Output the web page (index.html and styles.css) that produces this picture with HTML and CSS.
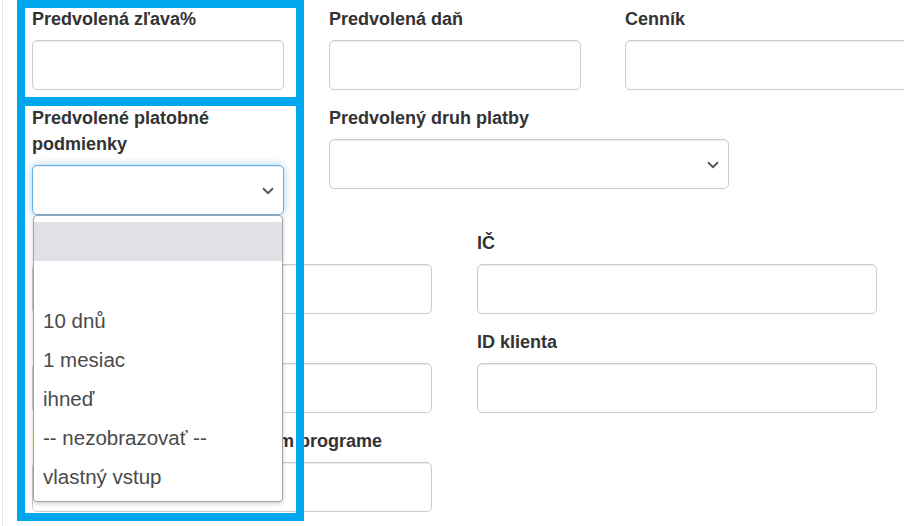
FILE: index.html
```html
<!DOCTYPE html>
<html lang="sk">
<head>
<meta charset="utf-8">
<title>Predvolené nastavenia</title>
<link rel="stylesheet" href="styles.css">
</head>
<body>
<div class="page">
  <div class="row">
    <div class="group narrow">
      <label class="lbl">Predvolená zľava%</label>
      <div class="field"></div>
    </div>
    <div class="group narrow">
      <label class="lbl">Predvolená daň</label>
      <div class="field"></div>
    </div>
    <div class="group wide-clip">
      <label class="lbl">Cenník</label>
      <div class="field"></div>
    </div>
  </div>

  <div class="row">
    <div class="group narrow host">
      <label class="lbl">Predvolené platobné podmienky</label>
      <div class="field select focus">
        <svg class="chev" width="12" height="8" viewBox="0 0 12 8"><path d="M1 1.2 L6 6.2 L11 1.2" fill="none" stroke="#555" stroke-width="2"/></svg>
      </div>
      <ul class="menu">
        <li class="opt hl">&nbsp;</li>
        <li class="opt">&nbsp;</li>
        <li class="opt">10 dnů</li>
        <li class="opt">1 mesiac</li>
        <li class="opt">ihneď</li>
        <li class="opt">-- nezobrazovať --</li>
        <li class="opt">vlastný vstup</li>
      </ul>
    </div>
    <div class="group half">
      <label class="lbl">Predvolený druh platby</label>
      <div class="field select">
        <svg class="chev" width="12" height="8" viewBox="0 0 12 8"><path d="M1 1.2 L6 6.2 L11 1.2" fill="none" stroke="#555" stroke-width="2"/></svg>
      </div>
    </div>
  </div>

  <div class="row">
    <div class="group half">
      <label class="lbl">&nbsp;</label>
      <div class="field"></div>
    </div>
    <div class="group half">
      <label class="lbl">IČ</label>
      <div class="field"></div>
    </div>
  </div>

  <div class="row">
    <div class="group half">
      <label class="lbl">&nbsp;</label>
      <div class="field"></div>
    </div>
    <div class="group half">
      <label class="lbl">ID klienta</label>
      <div class="field"></div>
    </div>
  </div>

  <div class="row">
    <div class="group half">
      <label class="lbl">Identifikačné číslo v účtovnom programe</label>
      <div class="field"></div>
    </div>
  </div>
</div>

<div class="mark mark-top"></div>
<div class="mark mark-bottom"></div>
</body>
</html>
```

FILE: styles.css
```css
html, body {
  margin: 0;
  padding: 0;
  background: #fff;
  overflow: hidden;
}

body {
  width: 904px;
  height: 526px;
  position: relative;
  font-family: "Liberation Sans", Arial, sans-serif;
  color: #333;
}

.page {
  margin-left: 2px;
  border-left: 1px solid #e6e6e6;
  min-height: 526px;
  padding: 6px 0 0 29px;
  box-sizing: border-box;
}

.row {
  display: flex;
  gap: 45px;
  align-items: flex-start;
}

.group {
  margin-bottom: 15px;
  flex: none;
}

.narrow { width: 252px; }
.half { width: 400px; }
.wide-clip { width: 320px; margin-left: -1px; }

.host { position: relative; }

.lbl {
  display: block;
  font-size: 18px;
  font-weight: bold;
  line-height: 26px;
  margin-bottom: 8px;
  color: #333;
}

.field {
  height: 50px;
  box-sizing: border-box;
  border: 1px solid #ccc;
  border-radius: 5px;
  background: #fff;
  box-shadow: inset 0 1px 1px rgba(0, 0, 0, 0.075);
  position: relative;
}

.select .chev {
  position: absolute;
  right: 9px;
  top: 21px;
}

.focus {
  border-color: #66afe9;
  box-shadow: inset 0 1px 1px rgba(0, 0, 0, 0.075), 0 0 8px rgba(102, 175, 233, 0.6);
}

.menu {
  position: absolute;
  left: 1px;
  top: 100%;
  width: 250px;
  box-sizing: border-box;
  margin: 0;
  padding: 6px 0;
  list-style: none;
  background: #fff;
  border: 1px solid #a3a3a3;
  border-radius: 4px;
  box-shadow: 0 2px 4px rgba(0, 0, 0, 0.18);
  z-index: 5;
}

.opt {
  height: 39px;
  line-height: 42px;
  padding-left: 9px;
  font-family: "Liberation Sans", Arial, sans-serif;
  font-size: 20.5px;
  color: #4a4a4a;
  white-space: nowrap;
  overflow: hidden;
}

.opt.hl { background: #e0e0e6; }

.mark {
  position: absolute;
  left: 17px;
  width: 287px;
  box-sizing: border-box;
  border: 8px solid #00a6ee;
  z-index: 10;
  pointer-events: none;
}

.mark-top { top: 0; height: 106px; }
.mark-bottom { top: 97px; height: 424px; }
```
